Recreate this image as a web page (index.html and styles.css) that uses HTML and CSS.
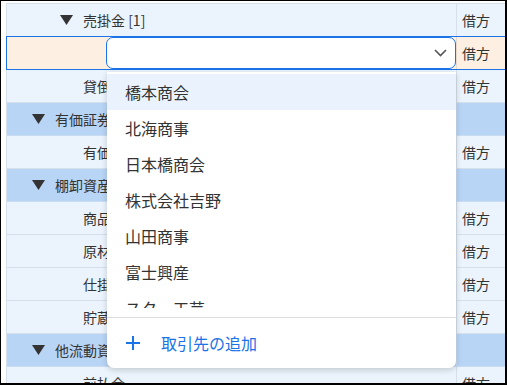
FILE: index.html
```html
<!DOCTYPE html>
<html lang="ja">
<head>
    <meta charset="UTF-8">
    <title>勘定科目</title>
    <link rel="stylesheet" href="styles.css">
</head>
<body>
    <div class="frame">
        <div class="table">
            <div class="row">
                <div class="cell name level-2">
                    <svg class="caret" width="13" height="10" viewBox="0 0 13 10"><polygon points="0,0 13,0 6.5,10"/></svg>
                    <span>売掛金 [1]</span>
                </div>
                <div class="cell side">借方</div>
            </div>
            <div class="row selected">
                <div class="cell name picker">
                    <div class="combo">
                        <div class="combo-input">
                            <svg class="chevron" width="13" height="8" viewBox="0 0 13 8"><polyline points="1,1 6.5,6.5 12,1"/></svg>
                        </div>
                        <div class="menu">
                            <div class="options">
                                <div class="option active">橋本商会</div>
                                <div class="option">北海商事</div>
                                <div class="option">日本橋商会</div>
                                <div class="option">株式会社吉野</div>
                                <div class="option">山田商事</div>
                                <div class="option">富士興産</div>
                                <div class="option">スター工芸</div>
                                <div class="option">東京物産</div>
                            </div>
                            <div class="menu-footer">
                                <svg class="plus" width="14" height="14" viewBox="0 0 14 14"><path d="M7 0v14M0 7h14"/></svg>
                                <span>取引先の追加</span>
                            </div>
                        </div>
                    </div>
                </div>
                <div class="cell side">借方</div>
            </div>
            <div class="row">
                <div class="cell name leaf">貸倒引当金</div>
                <div class="cell side">借方</div>
            </div>
            <div class="row group">
                <div class="cell name level-1">
                    <svg class="caret" width="13" height="10" viewBox="0 0 13 10"><polygon points="0,0 13,0 6.5,10"/></svg>
                    <span>有価証券</span>
                </div>
                <div class="cell side"></div>
            </div>
            <div class="row">
                <div class="cell name leaf">有価証券</div>
                <div class="cell side">借方</div>
            </div>
            <div class="row group">
                <div class="cell name level-1">
                    <svg class="caret" width="13" height="10" viewBox="0 0 13 10"><polygon points="0,0 13,0 6.5,10"/></svg>
                    <span>棚卸資産</span>
                </div>
                <div class="cell side"></div>
            </div>
            <div class="row">
                <div class="cell name leaf">商品</div>
                <div class="cell side">借方</div>
            </div>
            <div class="row">
                <div class="cell name leaf">原材料</div>
                <div class="cell side">借方</div>
            </div>
            <div class="row">
                <div class="cell name leaf">仕掛品</div>
                <div class="cell side">借方</div>
            </div>
            <div class="row">
                <div class="cell name leaf">貯蔵品</div>
                <div class="cell side">借方</div>
            </div>
            <div class="row group">
                <div class="cell name level-1">
                    <svg class="caret" width="13" height="10" viewBox="0 0 13 10"><polygon points="0,0 13,0 6.5,10"/></svg>
                    <span>他流動資産</span>
                </div>
                <div class="cell side"></div>
            </div>
            <div class="row">
                <div class="cell name leaf">前払金</div>
                <div class="cell side">借方</div>
            </div>
        </div>
    </div>
</body>
</html>
```

FILE: styles.css
```css
html, body {
    margin: 0;
    background-color: #fff;
}

body {
    font-family: "Noto Sans CJK JP", "Noto Sans", sans-serif;
    color: #333;
}

.frame {
    box-sizing: border-box;
    width: 507px;
    height: 385px;
    border: 1px solid #000;
    border-right-width: 2px;
    border-bottom-width: 2px;
    padding: 2px 0 0 5px;
    overflow: hidden;
}

.table {
    width: 530px;
    border-top: 1px solid #d6e0ea;
    border-left: 1px solid #d6e0ea;
}

.row {
    box-sizing: border-box;
    display: grid;
    grid-template-columns: 449px 1fr;
    height: 33px;
    background-color: #ebf4fd;
    border-bottom: 1px solid #d6e0ea;
    font-size: 14px;
}

.row.group {
    background-color: #b9d5f6;
    border-bottom-color: #c9dcf2;
}

.row.selected {
    position: relative;
    z-index: 2;
    height: 34px;
    margin-top: -1px;
    margin-left: -1px;
    background-color: #fdefe2;
    border: 1px solid #1a73e8;
    border-right: none;
}

.cell {
    display: flex;
    align-items: center;
    white-space: nowrap;
    overflow: hidden;
}

.side {
    border-left: 1px solid #d6e0ea;
    padding-left: 5px;
}

.group .side {
    border-left-color: #c9dcf2;
}

.selected .side {
    border-left-color: #e7d9cc;
}

.caret {
    fill: #333;
    flex: none;
    margin-right: 10px;
}

.level-1 {
    padding-left: 25px;
}

.level-2 {
    padding-left: 53px;
}

.leaf {
    padding-left: 76px;
}

/* combobox opened over the selected row */
.picker {
    overflow: visible;
    align-items: stretch;
    padding-left: 99px;
}

.combo {
    position: relative;
    width: 350px;
}

.combo-input {
    box-sizing: border-box;
    height: 32px;
    background-color: #fff;
    border: 1.5px solid #1a73e8;
    border-radius: 7px;
    display: flex;
    align-items: center;
    justify-content: flex-end;
    padding-right: 8px;
}

.chevron {
    fill: none;
    stroke: #555;
    stroke-width: 1.6;
}

.menu {
    position: absolute;
    top: 35px;
    left: 1px;
    right: 0;
    background-color: #fff;
    border-radius: 0 0 7px 7px;
    box-shadow: 0 2px 6px rgba(0, 0, 0, 0.18);
    padding-top: 2px;
}

.options {
    height: 234px;
    overflow: hidden;
}

.option {
    height: 36px;
    line-height: 36px;
    padding-left: 18px;
    font-size: 16px;
    color: #333;
}

.option.active {
    background-color: #eaf3fd;
}

.menu-footer {
    margin-top: 9px;
    border-top: 1px solid #dedede;
    height: 50px;
    display: flex;
    align-items: center;
    padding-left: 19px;
    color: #1a73e8;
    font-size: 16px;
}

.plus {
    fill: none;
    stroke: #1a73e8;
    stroke-width: 2;
    margin-right: 21px;
}
```
